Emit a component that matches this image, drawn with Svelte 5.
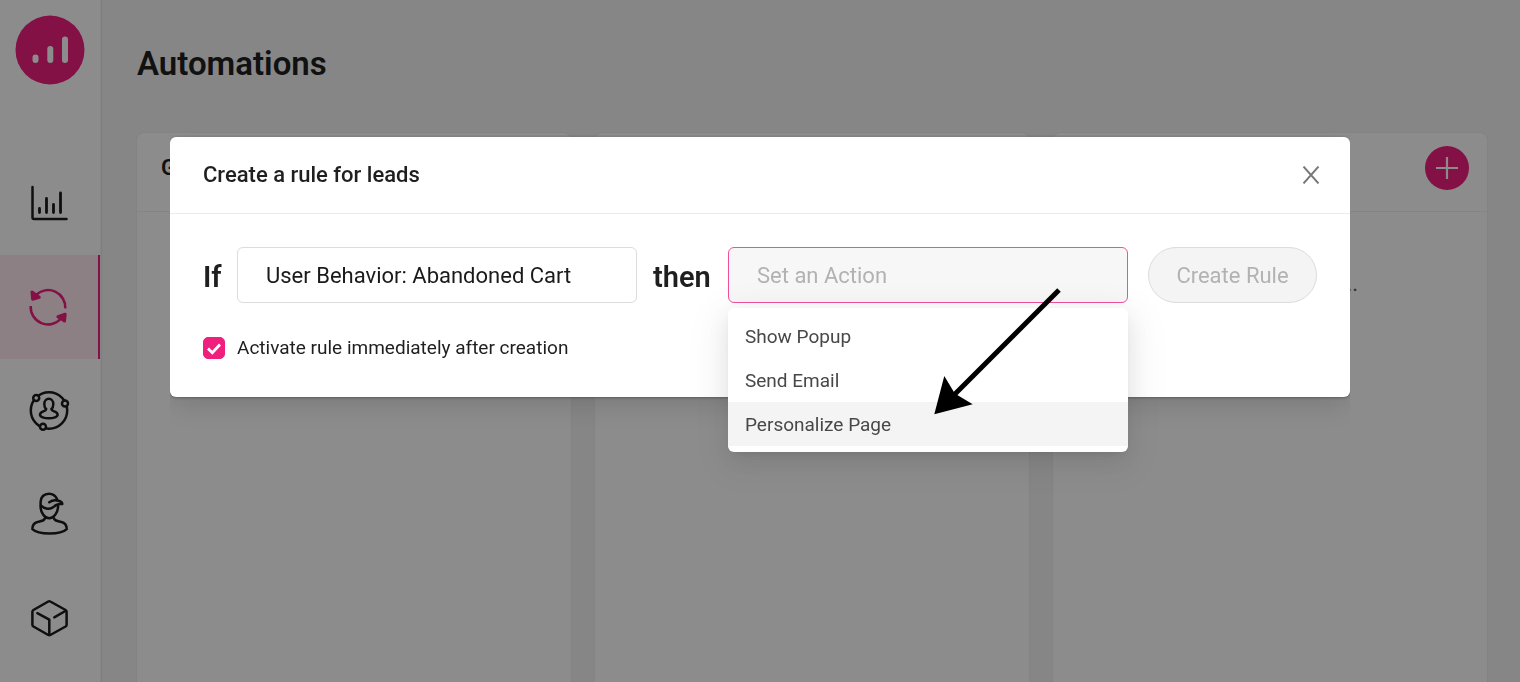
<script>
  let condition = $state('User Behavior: Abandoned Cart');
  let action = $state('');
  let activate = $state(true);
  const actions = ['Show Popup', 'Send Email', 'Personalize Page'];
  let highlighted = $state(2);
</script>

<div class="app">
  <aside class="sidebar">
    <a class="logo" href="#home" aria-label="Home">
      <svg viewBox="0 0 70 70" width="70" height="70" fill="none" stroke="#fff" stroke-width="6" stroke-linecap="round">
        <circle cx="35" cy="35" r="34.5" fill="#f01f7e" stroke="none" />
        <path d="M20.5 42.5v2.5M35.3 34v11M50 24.5V45" />
      </svg>
    </a>
    <nav>
      <a class="item" href="#analytics" aria-label="Analytics">
        <svg viewBox="0 0 42 42">
          <path d="M3.5 5v30.5q0 1.5 1.5 1.5h32.5" />
          <path d="M10.5 26.5v4M17.5 16.5v14M24.5 22.5v8M31.5 11v19.5" stroke-width="2.8" />
        </svg>
      </a>
      <a class="item active" href="#automations" aria-label="Automations">
        <svg viewBox="0 0 42 42">
          <path d="M36.300 22.400A17.300 17.300 0 0 0 7 9M1.700 20A17.300 17.300 0 0 0 32 32.500" stroke-linecap="butt" />
          <path class="solid" d="M3 6l.6 7.200 6.600-1.900zM36.200 28.200l-.7 6.800-6.600-4.300z" />
        </svg>
      </a>
      <a class="item" href="#audience" aria-label="Audience">
        <svg viewBox="0 0 42 42">
          <circle cx="20" cy="20.5" r="18.2" />
          <g class="knot">
            <circle cx="7.2" cy="8" r="3" />
            <circle cx="36" cy="13.4" r="3" />
            <circle cx="14" cy="36.7" r="3" />
          </g>
          <path d="M17.200 19C15.800 17.800 15.300 16 15.300 14.200c0-3.300 2-5.400 4.500-5.400s4.500 2.100 4.500 5.400c0 1.800-.5 3.600-1.900 4.800.2 3 6 1.700 6.200 5.600.3 5-17.900 5-17.600 0 .2-3.900 6-2.600 6.200-5.600z" />
        </svg>
      </a>
      <a class="item" href="#leads" aria-label="Leads">
        <svg viewBox="0 0 42 42">
          <path d="M28 5C26.500 1.500 23.500-.3 20-.3c-5 0-8.400 3.400-8.400 8.300v4.500c0 6.500 4.200 11.800 8.600 11.800s8.800-5.300 8.800-11.800v-.7" />
          <path d="M20.300 8.300c3-2.200 6.700-2.200 9.200-1.500 2.200.6 3.800 1.500 3.800 3.200-3.800-.4-6 .2-8 2.300-3.800 3.800-10.300 2.700-13.300-.8" />
          <path d="M16 24c-.3 2.700-3 3.100-6.500 3.700C5 28.500 3.300 31 3.400 35.200c6 5.800 28.300 5.800 34.300 0C37.800 31 36 28.500 31.500 27.700 28 27.100 25.200 26.700 24.800 24" />
        </svg>
      </a>
      <a class="item" href="#products" aria-label="Products">
        <svg viewBox="0 0 42 42">
          <path d="M19.300 3.500q1-.6 2 0l15.300 8.500q1 .6 1 1.700v13q0 1.200-1 1.800l-15.300 8.500q-1 .6-2 0L4.400 28.500q-1-.6-1-1.800v-13q0-1.100 1-1.700z" />
          <path d="M8.300 15.200l12 6.500v15M25.300 19.300l11-6.300" />
        </svg>
      </a>
    </nav>
  </aside>

  <main>
    <h1>Automations</h1>
    <div class="board">
      <section class="column">
        <header><h2>G</h2></header>
      </section>
      <section class="column">
        <header></header>
      </section>
      <section class="column">
        <header>
          <button class="add" type="button" aria-label="Add rule">
            <svg viewBox="0 0 22 22" width="22" height="22"><path d="M11 0v22M0 11h22" stroke="#fff" stroke-width="2.200" /></svg>
          </button>
        </header>
        <p class="more">...</p>
      </section>
    </div>
  </main>
</div>

<div class="overlay">
  <div class="modal" role="dialog" aria-modal="true" aria-labelledby="dialog-title">
    <header class="modal-head">
      <h2 id="dialog-title">Create a rule for leads</h2>
      <button class="close" type="button" aria-label="Close">
        <svg viewBox="0 0 18 18" width="18" height="18"><path d="M1.500.5l15 17M16.500.5l-15 17" stroke="#777" stroke-width="1.900" /></svg>
      </button>
    </header>
    <form class="modal-body" onsubmit={(e) => e.preventDefault()}>
      <div class="rule">
        <label class="word if" for="condition">If</label>
        <div class="field"><input id="condition" type="text" bind:value={condition} /></div>
        <label class="word then" for="action">then</label>
        <div class="field">
          <input id="action" class="open" type="text" placeholder="Set an Action" autocomplete="off" bind:value={action} />
          <div class="menu">
            {#each actions as name, i}
              <button
                type="button"
                class:highlighted={i === highlighted}
                onmouseenter={() => (highlighted = i)}
                onclick={() => (action = name)}>{name}</button>
            {/each}
          </div>
          <svg class="pointer" viewBox="932 286 130 130" width="130" height="130" aria-hidden="true">
            <path d="M1059 290L951 398" stroke="#000" stroke-width="5" />
            <path d="M934.300 414.300L944.300 376l10.500 17.500L972.700 404.300z" />
          </svg>
        </div>
        <button class="create" type="submit" disabled>Create Rule</button>
      </div>
      <label class="check">
        <input type="checkbox" bind:checked={activate} />
        <span>Activate rule immediately after creation</span>
      </label>
    </form>
  </div>
</div>

<style>
  :global(body) {
    margin: 0;
    font-family: Roboto, "Liberation Sans", sans-serif;
    color: #1f1f1f;
  }
  h1, h2, p { margin: 0; }
  button, input { font-family: inherit; box-sizing: border-box; }

  .app { display: flex; min-height: 100vh; background: #f4f4f4; }
  .sidebar {
    flex: none;
    width: 100px;
    background: #fff;
    border-right: 1px solid #f4f4f4;
    box-shadow: 1px 0 1px rgba(0, 0, 0, 0.05);
  }
  .logo { display: block; padding: 15px 15px 66px; }
  .logo svg { display: block; }
  .item {
    display: flex;
    align-items: center;
    box-sizing: border-box;
    height: 104px;
    padding-left: 29px;
    color: #1c1c1c;
  }
  .item svg {
    width: 42px;
    height: 42px;
    overflow: visible;
    fill: none;
    stroke: currentColor;
    stroke-width: 2.500;
    stroke-linecap: round;
    stroke-linejoin: round;
  }
  .item .solid { fill: currentColor; stroke-width: 3; }
  .item .knot { fill: #fff; }
  .item.active {
    color: #f01f7e;
    background: #ffe9f0;
    border-right: 2px solid #f01f7e;
  }

  main {
    flex: 1;
    display: flex;
    flex-direction: column;
    padding: 40px 33px 0 36px;
  }
  h1 { font-size: 33px; line-height: 48px; font-weight: 600; }
  .board {
    flex: 1;
    display: grid;
    grid-template-columns: repeat(3, 1fr);
    gap: 24px;
    margin-top: 45px;
  }
  .column {
    background: #fff;
    border-radius: 6px 6px 0 0;
    box-shadow: 0 0 1px rgba(0, 0, 0, 0.2);
  }
  .column header {
    display: flex;
    align-items: center;
    box-sizing: border-box;
    height: 79px;
    padding: 0 18px 8px 24px;
    border-bottom: 1px solid #f0f0f0;
  }
  .column h2 { font-size: 22px; line-height: 28px; font-weight: 600; }
  .add {
    display: grid;
    place-items: center;
    width: 44px;
    height: 44px;
    margin-left: auto;
    padding: 0;
    border: 0;
    border-radius: 50%;
    background: #f01f7e;
  }
  .more {
    padding: 60px 129px 0 0;
    text-align: right;
    font-size: 22px;
    line-height: 24px;
    color: #555;
  }

  .overlay {
    position: fixed;
    inset: 0;
    box-sizing: border-box;
    padding: 137px 24px 0;
    background: rgba(0, 0, 0, 0.45);
  }
  .modal {
    position: relative;
    max-width: 1180px;
    margin: 0 auto;
  }
  .modal::before {
    content: "";
    position: absolute;
    inset: 0;
    z-index: -1;
    border-radius: 6px;
    background: #fff;
    box-shadow: 0 6px 32px rgba(0, 0, 0, 0.15), 0 1px 3px rgba(0, 0, 0, 0.3);
    clip-path: inset(-2px 0 -33px 0);
  }
  .modal-head {
    display: flex;
    align-items: center;
    justify-content: space-between;
    box-sizing: border-box;
    height: 77px;
    padding: 0 22px 0 33px;
    border-bottom: 1px solid #ececec;
  }
  .modal-head h2 { font-size: 22px; line-height: 32px; font-weight: 500; }
  .close {
    display: grid;
    place-items: center;
    width: 34px;
    height: 34px;
    padding: 0;
    border: 0;
    background: none;
  }
  .modal-body { padding: 33px 33px 37px; }
  .rule { display: flex; align-items: center; }
  .word { flex: none; font-size: 29px; line-height: 36px; font-weight: 600; padding-top: 4px; }
  .if { width: 34px; }
  .then { width: 75px; margin-left: 16px; }
  .field { position: relative; flex: 1; }
  .field input {
    display: block;
    width: 100%;
    height: 56px;
    padding: 0 28px;
    border: 1px solid #dcdcdc;
    border-radius: 6px;
    outline: none;
    background: #fff;
    font-size: 22px;
    color: #1a1a1a;
  }
  .field input.open { border-color: #f2509a; background: #f7f7f7; }
  .field input::placeholder { color: #b2b2b2; opacity: 1; }
  .menu {
    position: absolute;
    top: 61px;
    left: 0;
    right: 0;
    padding: 6px 0;
    border-radius: 6px;
    background: #fff;
    box-shadow:
      0 4px 8px -5px rgba(0, 0, 0, 0.12),
      0 8px 22px rgba(0, 0, 0, 0.08),
      0 12px 38px 11px rgba(0, 0, 0, 0.05);
  }
  .menu button {
    display: block;
    width: 100%;
    height: 44px;
    padding: 0 17px;
    border: 0;
    background: none;
    text-align: left;
    font-size: 19px;
    color: #484848;
  }
  .menu button.highlighted { background: #f4f4f4; }
  .pointer { position: absolute; top: 39px; left: 204px; pointer-events: none; }
  .create {
    flex: none;
    width: 169px;
    height: 56px;
    margin-left: 20px;
    padding: 0;
    border: 1px solid #dcdcdc;
    border-radius: 28px;
    background: #f4f4f4;
    font-size: 22px;
    color: #b2b2b2;
  }
  .check {
    display: flex;
    align-items: center;
    gap: 12px;
    margin-top: 33px;
    font-size: 19px;
    line-height: 24px;
  }
  .check input {
    appearance: none;
    flex: none;
    width: 22px;
    height: 22px;
    margin: 0;
    border: 1px solid #dcdcdc;
    border-radius: 5px;
  }
  .check input:checked {
    border-color: #f01f7e;
    background: #f01f7e url("data:image/svg+xml,%3Csvg xmlns='http://www.w3.org/2000/svg' viewBox='0 0 20 20'%3E%3Cpath d='M4 10.500l4.300 4.200L16 6.500' fill='none' stroke='white' stroke-width='2.800'/%3E%3C/svg%3E") center / 20px 20px no-repeat;
  }
</style>
